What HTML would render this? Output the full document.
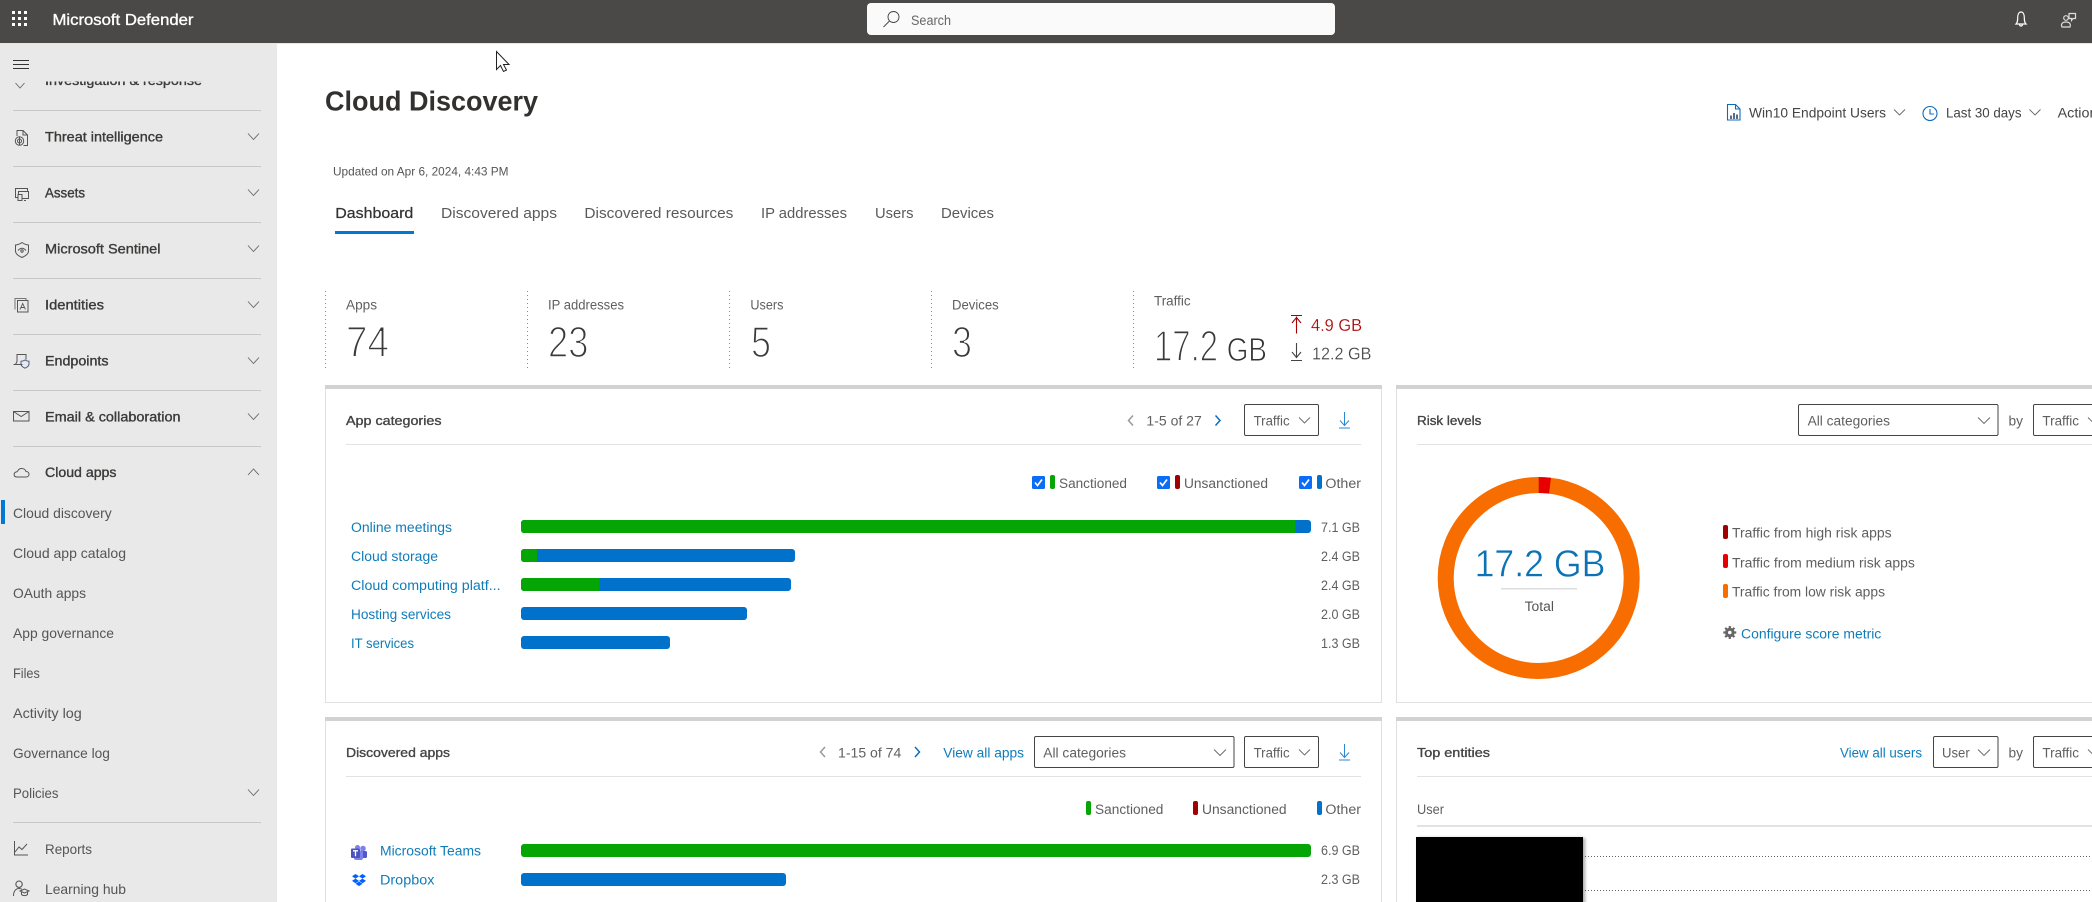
<!DOCTYPE html>
<html lang="en">
<head>
<meta charset="utf-8">
<title>Cloud Discovery - Microsoft Defender</title>
<style>
html,body{margin:0;padding:0;width:2092px;height:902px;overflow:hidden;background:#fff}
svg{display:block}
text{font-family:"Liberation Sans",sans-serif;font-size:14px;fill:#555}
.b{font-size:13.5px;fill:#3b3a39;stroke:#3b3a39;stroke-width:.35px}
.sub{fill:#555;font-size:14px}
.tab{font-size:15px;fill:#5a5a5a}
.lbl{font-size:13.5px;fill:#5f5f5f}
.num{font-size:43.5px;fill:#3a3a3a;stroke:#fff;stroke-width:1.5px}
.ct{font-size:13px;fill:#444;stroke:#444;stroke-width:.35px}
.lnk{fill:#0f7cba;font-size:13.5px}
.val{fill:#5f5f5f;font-size:13.5px}
.ic{fill:none;stroke:#555;stroke-width:1}
.chev{fill:none;stroke:#666;stroke-width:.9}
.dd{fill:#fff;stroke:#444;stroke-width:1}
</style>
</head>
<body>
<svg width="2092" height="902" viewBox="0 0 2092 902" xmlns="http://www.w3.org/2000/svg">
<defs>
<clipPath id="navclip"><rect x="0" y="81.500" width="277" height="20"/></clipPath>
<filter id="sh" x="-5%" y="-5%" width="112%" height="110%"><feDropShadow dx="2" dy="1" stdDeviation="1.5" flood-color="#000" flood-opacity=".35"/></filter>
</defs>
<rect width="2092" height="902" fill="#fff"/>

<!-- Top bar -->
<rect width="2092" height="43" fill="#4a4947"/>
<rect y="43" width="2092" height="1" fill="#e6e6e6"/>
<g fill="#fff">
<rect x="12" y="11" width="3" height="3"/><rect x="18" y="11" width="3" height="3"/><rect x="24" y="11" width="3" height="3"/>
<rect x="12" y="17" width="3" height="3"/><rect x="18" y="17" width="3" height="3"/><rect x="24" y="17" width="3" height="3"/>
<rect x="12" y="23" width="3" height="3"/><rect x="18" y="23" width="3" height="3"/><rect x="24" y="23" width="3" height="3"/>
</g>
<text x="52.500" y="25" textLength="141" lengthAdjust="spacingAndGlyphs" style="fill:#fff;stroke:#fff;stroke-width:.35px;font-size:15.500px">Microsoft Defender</text>
<rect x="867" y="3" width="468" height="32" rx="4" fill="#fafafa"/>
<g class="ic" style="stroke:#444;stroke-width:.9"><circle cx="893.500" cy="17" r="5.500"/><path d="M889.500 21l-6 6"/></g>
<text x="911" y="25" textLength="40" lengthAdjust="spacingAndGlyphs" style="fill:#666;font-size:13.500px">Search</text>
<g fill="none" stroke="#fff" stroke-width="1.200">
<path d="M2016 24c1.500-1.500 1.700-3 1.700-6.500 0-3.500 1.400-5.500 3.300-5.500s3.300 2 3.300 5.500c0 3.500.2 5 1.700 6.500z"/>
<path d="M2019.500 24.500c.3 2 2.700 2 3 0"/>
<g stroke="#ddd"><circle cx="2066" cy="18" r="2.300"/>
<path d="M2062 27c-1.500-3 .5-5 4-5s5 2 4 5z"/>
<path d="M2069 13.500h6.500v5h-2.500l-1.500 2v-2h-2.500z"/></g>
</g>

<!-- Sidebar -->
<rect y="44" width="277" height="858" fill="#e9e9e9"/>
<g stroke="#333" stroke-width="1"><path d="M13 60.500h16M13 64.500h16M13 68.500h16"/></g>
<g clip-path="url(#navclip)">
<text class="b" x="45" y="85" textLength="157" lengthAdjust="spacingAndGlyphs">Investigation &amp; response</text>
<path class="chev" d="M15.500 83l4.500 5 4.500-5"/>
</g>
<g fill="#c8c8c8">
<rect x="13" y="110" width="248" height="1"/><rect x="13" y="166" width="248" height="1"/>
<rect x="13" y="222" width="248" height="1"/><rect x="13" y="278" width="248" height="1"/>
<rect x="13" y="334" width="248" height="1"/><rect x="13" y="390" width="248" height="1"/>
<rect x="13" y="446" width="248" height="1"/><rect x="13" y="822" width="248" height="1"/>
</g>
<text class="b" x="45" y="141.500" textLength="118" lengthAdjust="spacingAndGlyphs">Threat intelligence</text>
<text class="b" x="45" y="197.500" textLength="40" lengthAdjust="spacingAndGlyphs">Assets</text>
<text class="b" x="45" y="253.500" textLength="115.500" lengthAdjust="spacingAndGlyphs">Microsoft Sentinel</text>
<text class="b" x="45" y="309.500" textLength="59" lengthAdjust="spacingAndGlyphs">Identities</text>
<text class="b" x="45" y="365.500" textLength="63.500" lengthAdjust="spacingAndGlyphs">Endpoints</text>
<text class="b" x="45" y="421.500" textLength="135.500" lengthAdjust="spacingAndGlyphs">Email &amp; collaboration</text>
<text class="b" x="45" y="477" textLength="71.500" lengthAdjust="spacingAndGlyphs">Cloud apps</text>
<g class="chev">
<path d="M248 133.500l5.500 6 5.500-6M248 189.500l5.500 6 5.500-6M248 245.500l5.500 6 5.500-6M248 301.500l5.500 6 5.500-6M248 357.500l5.500 6 5.500-6M248 413.500l5.500 6 5.500-6"/>
<path d="M248 475l5.500-6 5.500 6"/>
<path d="M248 789.500l5.500 6 5.500-6"/>
</g>
<!-- Nav icons -->
<g class="ic">
<path d="M17 136v-5.500h6l4.500 4.500v10.500h-4"/><path d="M23 130.500v4.500h4.500"/>
<circle cx="19.500" cy="141" r="4.200"/><circle cx="19.500" cy="141" r="2"/><path d="M19.500 136.800v8.400"/>
<path d="M22 197.500h-6.500v-9h12v3"/><rect x="18.500" y="191.500" width="10" height="7"/><rect x="18" y="194.500" width="4" height="6" fill="#e9e9e9"/><path d="M24 200.500h2"/>
<path d="M22 242.500c2 1.500 4 2.300 6.500 2.500v6c0 3-3 5-6.500 6.500-3.500-1.500-6.500-3.500-6.500-6.500v-6c2.500-.2 4.500-1 6.500-2.500z"/><path d="M18 250.500c2.500-3 5.500-3 8 0"/><circle cx="22" cy="251" r="1.200"/>
<path d="M15 309.500v-11h11v2" stroke="#777"/><rect x="17.500" y="300.500" width="10.500" height="11.500"/><path d="M20 309.500l2.700-6 2.700 6M21 307.500h3.500" stroke-width=".9"/>
<path d="M15.500 364.500l1.500-3v-7h9v5"/><path d="M13.500 364.500h9"/><path d="M25 360c1.300.8 2.500 1.200 4 1.300v2.700c0 2-1.800 3.200-4 4.200-2.200-1-4-2.200-4-4.200v-2.700c1.500-.1 2.700-.5 4-1.300z" stroke="#4a5a8a"/>
<rect x="13.500" y="411.500" width="15.500" height="9.500"/><path d="M13.500 411.500l7.700 5 7.800-5"/>
<path d="M17 477h9c4 0 4-5.500 0-5.500-.8-3-6-4.500-8-1-.2.500-.5 1-1.200 1.300-3.800.8-3.400 5.200.2 5.200z"/>
<path d="M14.500 841v14h13.500"/><path d="M15 852l4-5 3 2.500 5-5.500"/>
<path d="M19 881a3.200 3.200 0 1 0 .1 0z"/><path d="M13.500 896c0-5 2.500-7.500 5.500-7.500 1 0 2 .2 3 .8"/><path d="M20 891l4.500-2 4.500 2-4.500 2zM21.500 892v2.500c1.500 1.500 4.500 1.500 6 0V892"/>
</g>
<rect x="1" y="500" width="4" height="24" fill="#0078d4"/>
<text class="sub" x="13" y="518" textLength="98.700" lengthAdjust="spacingAndGlyphs">Cloud discovery</text>
<text class="sub" x="13" y="558" textLength="113" lengthAdjust="spacingAndGlyphs">Cloud app catalog</text>
<text class="sub" x="13" y="598" textLength="73" lengthAdjust="spacingAndGlyphs">OAuth apps</text>
<text class="sub" x="13" y="638" textLength="101" lengthAdjust="spacingAndGlyphs">App governance</text>
<text class="sub" x="13" y="678" textLength="26.800" lengthAdjust="spacingAndGlyphs">Files</text>
<text class="sub" x="13" y="718" textLength="68.800" lengthAdjust="spacingAndGlyphs">Activity log</text>
<text class="sub" x="13" y="758" textLength="96.900" lengthAdjust="spacingAndGlyphs">Governance log</text>
<text class="sub" x="13" y="798" textLength="45.500" lengthAdjust="spacingAndGlyphs">Policies</text>
<text class="sub" x="45" y="854" textLength="47" lengthAdjust="spacingAndGlyphs">Reports</text>
<text class="sub" x="45" y="894" textLength="81" lengthAdjust="spacingAndGlyphs">Learning hub</text>

<!-- Cursor -->
<path d="M496.500 51.500v18l4-4 3 6 3-1.500-3-5.500h5.500z" fill="#fff" stroke="#222" stroke-width="1"/>

<!-- Title -->
<text x="325" y="110.700" textLength="213" lengthAdjust="spacingAndGlyphs" style="font-size:27.500px;font-weight:700;fill:#323130">Cloud Discovery</text>
<text x="333" y="175.500" textLength="175.500" lengthAdjust="spacingAndGlyphs" style="font-size:12px;fill:#555">Updated on Apr 6, 2024, 4:43 PM</text>

<!-- Right header -->
<g fill="none" stroke="#0f6cbd" stroke-width="1.100">
<path d="M1727.500 104.500h8l4.500 4.500v11h-12.500z"/><path d="M1735.500 104.500v4.500h4.500"/>
<path d="M1731 119v-3.500M1734 119v-6M1737 119v-4.500" stroke="#203a6a" stroke-width="1.500"/>
<circle cx="1930" cy="113.500" r="7"/><path d="M1930 109v5h4"/>
</g>
<text x="1749" y="117.300" textLength="137" lengthAdjust="spacingAndGlyphs" style="font-size:14px;fill:#444">Win10 Endpoint Users</text>
<path class="chev" d="M1894 109.500l5.500 5.500 5.500-5.500M2029.500 109.500l5.500 5.500 5.500-5.500"/>
<text x="1946" y="117.300" textLength="75.500" lengthAdjust="spacingAndGlyphs" style="font-size:14px;fill:#444">Last 30 days</text>
<text x="2057.600" y="117.300" textLength="47" lengthAdjust="spacingAndGlyphs" style="font-size:14px;fill:#444">Actions</text>

<!-- Tabs -->
<text class="tab" x="335.300" y="218" textLength="78" lengthAdjust="spacingAndGlyphs" style="fill:#333;stroke:#333;stroke-width:.25">Dashboard</text>
<rect x="335" y="231" width="79" height="3" fill="#0078d4"/>
<text class="tab" x="441" y="218" textLength="116" lengthAdjust="spacingAndGlyphs">Discovered apps</text>
<text class="tab" x="584.400" y="218" textLength="149" lengthAdjust="spacingAndGlyphs">Discovered resources</text>
<text class="tab" x="761" y="218" textLength="86" lengthAdjust="spacingAndGlyphs">IP addresses</text>
<text class="tab" x="875" y="218" textLength="38.500" lengthAdjust="spacingAndGlyphs">Users</text>
<text class="tab" x="941" y="218" textLength="53" lengthAdjust="spacingAndGlyphs">Devices</text>

<!-- Stats -->
<g stroke="#888" stroke-width="1" stroke-dasharray="1 3">
<path d="M325.500 291v77M527.500 291v77M729.500 291v77M931.500 291v77M1133.500 291v77"/>
</g>
<text class="lbl" x="346" y="309.500" textLength="31" lengthAdjust="spacingAndGlyphs">Apps</text>
<text class="lbl" x="548" y="309.500" textLength="76" lengthAdjust="spacingAndGlyphs">IP addresses</text>
<text class="lbl" x="750.400" y="309.500" textLength="33" lengthAdjust="spacingAndGlyphs">Users</text>
<text class="lbl" x="952" y="309.500" textLength="46.700" lengthAdjust="spacingAndGlyphs">Devices</text>
<text class="lbl" x="1154" y="305.500" textLength="36.600" lengthAdjust="spacingAndGlyphs">Traffic</text>
<text class="num" x="346" y="357" textLength="43" lengthAdjust="spacingAndGlyphs">74</text>
<text class="num" x="548" y="357" textLength="40.400" lengthAdjust="spacingAndGlyphs">23</text>
<text class="num" x="751" y="357" textLength="20" lengthAdjust="spacingAndGlyphs">5</text>
<text class="num" x="952" y="357" textLength="20" lengthAdjust="spacingAndGlyphs">3</text>
<text class="num" x="1154" y="361" textLength="64" lengthAdjust="spacingAndGlyphs">17.2</text>
<text x="1226.800" y="361" textLength="40.200" lengthAdjust="spacingAndGlyphs" style="font-size:33px;fill:#333;stroke:#fff;stroke-width:.9px">GB</text>
<g fill="none" stroke="#a80000" stroke-width="1.100"><path d="M1291 315.500h11M1296.500 316.500v17M1292 323l4.500-5.500 4.500 5.500"/></g>
<text x="1311" y="331" textLength="51" lengthAdjust="spacingAndGlyphs" style="font-size:17.500px;fill:#a80000;stroke:#fff;stroke-width:.2px">4.9 GB</text>
<g fill="none" stroke="#444" stroke-width="1.100"><path d="M1291 360.500h11M1296.500 343v15M1292 352l4.500 5.500 4.500-5.500"/></g>
<text x="1312" y="359.300" textLength="59.400" lengthAdjust="spacingAndGlyphs" style="font-size:17.500px;fill:#444;stroke:#fff;stroke-width:.2px">12.2 GB</text>

<!-- Card frames -->
<g fill="none" stroke="#e0e0e0" stroke-width="1">
<rect x="325.500" y="385.500" width="1056" height="317"/>
<path d="M2092 702.500H1396.500V385.500H2092"/>
<path d="M325.500 902V717.500H1381.500V902"/>
<path d="M1396.500 902V717.500H2092"/>
</g>
<g fill="#d2d2d2">
<rect x="325" y="385" width="1057" height="4"/><rect x="1396" y="385" width="696" height="4"/>
<rect x="325" y="717" width="1057" height="4"/><rect x="1396" y="717" width="696" height="4"/>
</g>
<g fill="#e2e2e2">
<rect x="346" y="444" width="1015" height="1"/><rect x="1417" y="444" width="675" height="1"/>
<rect x="346" y="776" width="1015" height="1"/><rect x="1417" y="776" width="675" height="1"/>
<rect x="1417" y="825" width="675" height="2"/>
</g>

<!-- App categories -->
<text class="ct" x="346" y="425" textLength="95.500" lengthAdjust="spacingAndGlyphs">App categories</text>
<path d="M1133 415.500l-4.500 5 4.500 5" fill="none" stroke="#999" stroke-width="1.500"/>
<text class="val" x="1146.400" y="425.500" textLength="55.400" lengthAdjust="spacingAndGlyphs">1-5 of 27</text>
<path d="M1215.500 415.500l4.500 5-4.500 5" fill="none" stroke="#0f6cbd" stroke-width="1.500"/>
<rect class="dd" x="1244.500" y="404.500" width="74" height="31" rx="1.500"/>
<text class="val" x="1253.600" y="425.500" textLength="36" lengthAdjust="spacingAndGlyphs">Traffic</text>
<path class="chev" d="M1299 417.500l5.500 5.500 5.500-5.500"/>
<g fill="none" stroke="#2a88cf" stroke-width="1"><path d="M1344.500 412v13M1340 420.500l4.500 5 4.500-5M1339 428h11"/></g>

<!-- Legend 1 -->
<g fill="#0b6cf5">
<rect x="1032" y="476" width="13" height="13" rx="1.500"/><rect x="1157" y="476" width="13" height="13" rx="1.500"/><rect x="1299" y="476" width="13" height="13" rx="1.500"/>
</g>
<g fill="none" stroke="#fff" stroke-width="1.700"><path d="M1035 482.500l2.500 3 4.500-6M1160 482.500l2.500 3 4.500-6M1302 482.500l2.500 3 4.500-6"/></g>
<rect x="1050" y="475" width="5" height="14" rx="2" fill="#05a505"/>
<rect x="1175" y="475" width="5" height="14" rx="2" fill="#a00000"/>
<rect x="1317" y="475" width="5" height="14" rx="2" fill="#0072cc"/>
<text class="val" x="1059" y="488" textLength="68" lengthAdjust="spacingAndGlyphs">Sanctioned</text>
<text class="val" x="1184" y="488" textLength="84" lengthAdjust="spacingAndGlyphs">Unsanctioned</text>
<text class="val" x="1325.400" y="488" textLength="35.600" lengthAdjust="spacingAndGlyphs">Other</text>

<!-- Bars 1 -->
<rect x="521" y="520" width="790" height="13" rx="3" fill="#0072cc"/>
<path d="M1295.500 520H524a3 3 0 0 0-3 3v7a3 3 0 0 0 3 3h771.500z" fill="#05a505"/>
<rect x="521" y="549" width="274" height="13" rx="3" fill="#0072cc"/>
<path d="M537 549h-13a3 3 0 0 0-3 3v7a3 3 0 0 0 3 3h13z" fill="#05a505"/>
<rect x="521" y="578" width="270" height="13" rx="3" fill="#0072cc"/>
<path d="M599.500 578H524a3 3 0 0 0-3 3v7a3 3 0 0 0 3 3h75.500z" fill="#05a505"/>
<rect x="521" y="607" width="226" height="13" rx="3" fill="#0072cc"/>
<rect x="521" y="636" width="149" height="13" rx="3" fill="#0072cc"/>
<text class="lnk" x="351" y="532" textLength="101" lengthAdjust="spacingAndGlyphs">Online meetings</text>
<text class="lnk" x="351" y="561" textLength="87" lengthAdjust="spacingAndGlyphs">Cloud storage</text>
<text class="lnk" x="351" y="590" textLength="149.600" lengthAdjust="spacingAndGlyphs">Cloud computing platf...</text>
<text class="lnk" x="351" y="619" textLength="100" lengthAdjust="spacingAndGlyphs">Hosting services</text>
<text class="lnk" x="351" y="648" textLength="63" lengthAdjust="spacingAndGlyphs">IT services</text>
<text class="val" x="1321" y="532" textLength="39" lengthAdjust="spacingAndGlyphs">7.1 GB</text>
<text class="val" x="1321" y="561" textLength="39" lengthAdjust="spacingAndGlyphs">2.4 GB</text>
<text class="val" x="1321" y="590" textLength="39" lengthAdjust="spacingAndGlyphs">2.4 GB</text>
<text class="val" x="1321" y="619" textLength="39" lengthAdjust="spacingAndGlyphs">2.0 GB</text>
<text class="val" x="1321" y="648" textLength="39" lengthAdjust="spacingAndGlyphs">1.3 GB</text>

<!-- Discovered apps -->
<text class="ct" x="346" y="757" textLength="104" lengthAdjust="spacingAndGlyphs">Discovered apps</text>
<path d="M825 747l-4.500 5 4.500 5" fill="none" stroke="#999" stroke-width="1.500"/>
<text class="val" x="838" y="757.300" textLength="63.300" lengthAdjust="spacingAndGlyphs">1-15 of 74</text>
<path d="M915 747l4.500 5-4.500 5" fill="none" stroke="#0f6cbd" stroke-width="1.500"/>
<text class="lnk" x="943.300" y="757.300" textLength="80.700" lengthAdjust="spacingAndGlyphs">View all apps</text>
<rect class="dd" x="1034.500" y="736.500" width="199.500" height="31" rx="1.500"/>
<text class="val" x="1043.300" y="757.300" textLength="82.700" lengthAdjust="spacingAndGlyphs">All categories</text>
<path class="chev" d="M1214 749.500l6 6 6-6"/>
<rect class="dd" x="1244.500" y="736.500" width="74" height="31" rx="1.500"/>
<text class="val" x="1253.600" y="757.300" textLength="36" lengthAdjust="spacingAndGlyphs">Traffic</text>
<path class="chev" d="M1299 749.500l5.500 5.500 5.500-5.500"/>
<g fill="none" stroke="#2a88cf" stroke-width="1"><path d="M1344.500 744v13M1340 752.500l4.500 5 4.500-5M1339 760h11"/></g>

<rect x="1086" y="801" width="5" height="14" rx="2" fill="#05a505"/>
<rect x="1193" y="801" width="5" height="14" rx="2" fill="#a00000"/>
<rect x="1317" y="801" width="5" height="14" rx="2" fill="#0072cc"/>
<text class="val" x="1095" y="814" textLength="68.400" lengthAdjust="spacingAndGlyphs">Sanctioned</text>
<text class="val" x="1202" y="814" textLength="84.600" lengthAdjust="spacingAndGlyphs">Unsanctioned</text>
<text class="val" x="1325.400" y="814" textLength="35.600" lengthAdjust="spacingAndGlyphs">Other</text>

<rect x="521" y="844" width="790" height="13" rx="3" fill="#05a505"/>
<rect x="521" y="873" width="265" height="13" rx="3" fill="#0072cc"/>
<circle cx="363" cy="848.500" r="2.800" fill="#7b83eb"/>
<circle cx="357.500" cy="847.500" r="2.500" fill="#7b83eb"/>
<rect x="360" y="851" width="7" height="7" rx="1.500" fill="#5059c9"/>
<rect x="354" y="850.500" width="9" height="9.500" rx="2" fill="#7b83eb"/>
<rect x="351" y="848.500" width="9" height="9.500" rx="1" fill="#4b53bc"/>
<path d="M353 850.800h5M355.500 850.800v5.500" stroke="#fff" stroke-width="1.300" fill="none"/>
<g fill="#0061ff">
<path d="M355.500 874l-3.500 2.300 3.500 2.300 3.500-2.300zM362.500 874l-3.500 2.300 3.500 2.300 3.500-2.300zM355.500 878.600l-3.500 2.300 3.500 2.300 3.500-2.300zM362.500 878.600l-3.500 2.300 3.500 2.300 3.500-2.300zM359 881.500l-3.500 2.300 3.500 2.300 3.500-2.300z"/>
</g>
<text class="lnk" x="380" y="855.500" textLength="101" lengthAdjust="spacingAndGlyphs">Microsoft Teams</text>
<text class="lnk" x="380" y="884.500" textLength="54.400" lengthAdjust="spacingAndGlyphs">Dropbox</text>
<text class="val" x="1321" y="855" textLength="39" lengthAdjust="spacingAndGlyphs">6.9 GB</text>
<text class="val" x="1321" y="884" textLength="39" lengthAdjust="spacingAndGlyphs">2.3 GB</text>

<!-- Risk levels -->
<text class="ct" x="1417" y="425" textLength="64.300" lengthAdjust="spacingAndGlyphs">Risk levels</text>
<rect class="dd" x="1798.500" y="404.500" width="199.500" height="31" rx="1.500"/>
<text class="val" x="1807.600" y="425.500" textLength="82.400" lengthAdjust="spacingAndGlyphs">All categories</text>
<path class="chev" d="M1978 417.500l6 6 6-6"/>
<text class="val" x="2008.500" y="425.500" textLength="14.500" lengthAdjust="spacingAndGlyphs">by</text>
<rect class="dd" x="2033.500" y="404.500" width="74" height="31" rx="1.500"/>
<text class="val" x="2042.400" y="425.500" textLength="36.600" lengthAdjust="spacingAndGlyphs">Traffic</text>
<path class="chev" d="M2088 417.500l5.500 5.500 5.500-5.500"/>

<circle cx="1538.700" cy="578" r="93" fill="none" stroke="#f76d00" stroke-width="16"/>
<path d="M1538.700 485A93 93 0 0 1 1550 485.700" fill="none" stroke="#e80000" stroke-width="16"/>
<text x="1474.600" y="576.700" textLength="130.800" lengthAdjust="spacingAndGlyphs" style="font-size:38px;fill:#0b72b5;stroke:#fff;stroke-width:.5px">17.2 GB</text>
<rect x="1501" y="588" width="76" height="1.500" fill="#ddd"/>
<text class="val" x="1524.600" y="611" textLength="29.400" lengthAdjust="spacingAndGlyphs" style="fill:#555">Total</text>

<rect x="1723" y="525" width="5" height="14" rx="2" fill="#a00000"/>
<rect x="1723" y="554" width="5" height="14" rx="2" fill="#e80000"/>
<rect x="1723" y="584" width="5" height="14" rx="2" fill="#f76d00"/>
<text class="val" x="1732" y="537.500" textLength="159.600" lengthAdjust="spacingAndGlyphs">Traffic from high risk apps</text>
<text class="val" x="1732" y="567.500" textLength="182.800" lengthAdjust="spacingAndGlyphs">Traffic from medium risk apps</text>
<text class="val" x="1732" y="596.500" textLength="153" lengthAdjust="spacingAndGlyphs">Traffic from low risk apps</text>
<g fill="#666">
<circle cx="1729.800" cy="632.500" r="4.800"/>
<path d="M1729.800 626v13M1723.300 632.500h13M1725.200 627.900l9.200 9.200M1734.400 627.900l-9.200 9.200" stroke="#666" stroke-width="2.200"/>
<circle cx="1729.800" cy="632.500" r="1.800" fill="#fff"/>
</g>
<text class="lnk" x="1741" y="638.500" textLength="140.300" lengthAdjust="spacingAndGlyphs">Configure score metric</text>

<!-- Top entities -->
<text class="ct" x="1417" y="757" textLength="73" lengthAdjust="spacingAndGlyphs">Top entities</text>
<text class="lnk" x="1840" y="757.300" textLength="82" lengthAdjust="spacingAndGlyphs">View all users</text>
<rect class="dd" x="1933.500" y="736.500" width="64.500" height="31" rx="1.500"/>
<text class="val" x="1942" y="757.300" textLength="27.700" lengthAdjust="spacingAndGlyphs">User</text>
<path class="chev" d="M1978 749.500l6 6 6-6"/>
<text class="val" x="2008.500" y="757.300" textLength="14.500" lengthAdjust="spacingAndGlyphs">by</text>
<rect class="dd" x="2033.500" y="736.500" width="74" height="31" rx="1.500"/>
<text class="val" x="2042.400" y="757.300" textLength="36.600" lengthAdjust="spacingAndGlyphs">Traffic</text>
<path class="chev" d="M2088 749.500l5.500 5.500 5.500-5.500"/>
<text class="val" x="1417" y="814" textLength="27" lengthAdjust="spacingAndGlyphs">User</text>
<g stroke="#666" stroke-width="1" stroke-dasharray="1 2"><path d="M1585 856.500H2092M1585 890.500H2092"/></g>
<rect x="1416" y="837" width="167" height="70" fill="#000" filter="url(#sh)"/>
</svg>
</body>
</html>
